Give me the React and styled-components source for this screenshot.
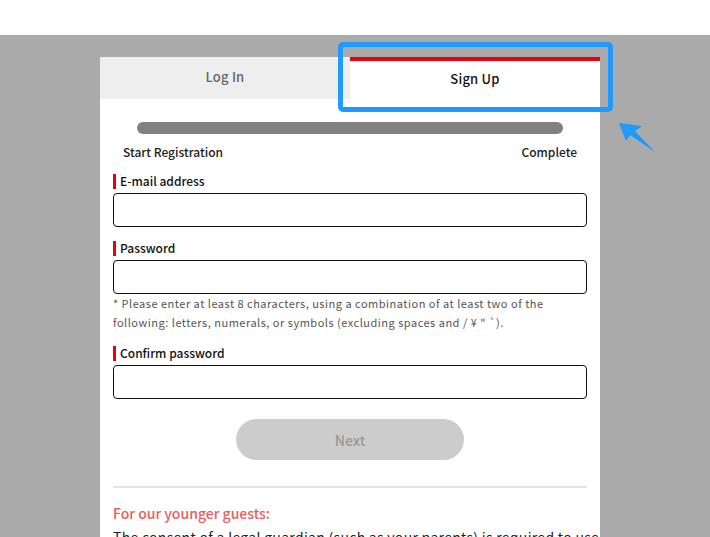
import React from 'react';
import styled, {createGlobalStyle} from 'styled-components';

const GlobalStyle = createGlobalStyle`
  html, body {
    margin: 0;
    padding: 0;
    background: #ffffff;
    font-family: "Noto Sans CJK JP", "Noto Sans", sans-serif;
    overflow: hidden;
  }
`;

const Page = styled.div`
  position: relative;
  width: 710px;
  height: 537px;
  overflow: hidden;
`;

const TopStrip = styled.div`
  height: 35px;
  background: #ffffff;
`;

const Backdrop = styled.div`
  background: #aaaaaa;
  padding: 22px 0 0 100px;
  height: 480px;
`;

const Card = styled.div`
  width: 500px;
  background: #ffffff;
`;

const Tabs = styled.div`
  display: flex;
  height: 42px;
`;

const Tab = styled.div`
  flex: 0 0 250px;
  display: flex;
  align-items: center;
  justify-content: center;
  box-sizing: border-box;
  font-size: 13px;
  font-weight: 500;
  background: ${p => (p.$active ? '#ffffff' : '#eeeeee')};
  color: ${p => (p.$active ? '#111111' : '#666666')};
  border-top: ${p => (p.$active ? '4px solid #e60012' : 'none')};
  padding-bottom: 3px;
  letter-spacing: 0.2px;
`;

const Body = styled.div`
  padding: 23px 13px 0 13px;
`;

const Progress = styled.div`
  margin: 0 24px;
  height: 12px;
  border-radius: 6px;
  background: #808080;
`;

const Steps = styled.div`
  display: flex;
  justify-content: space-between;
  padding: 0 10px;
  margin-top: 10px;
  font-size: 12px;
  font-weight: 500;
  color: #222222;
  line-height: 16px;
`;

const Field = styled.div`
  margin-top: ${p => p.$top}px;
`;

const Label = styled.div`
  display: flex;
  align-items: center;
  gap: 4px;
  font-size: 12px;
  font-weight: 500;
  color: #111111;
  line-height: 16px;

  &::before {
    content: '';
    width: 3px;
    height: 15px;
    background: #e60012;
  }
`;

const Input = styled.input`
  display: block;
  box-sizing: border-box;
  width: 474px;
  height: 34px;
  margin-top: 4px;
  border: 1px solid #111111;
  border-radius: 4px;
  background: #ffffff;
  outline: none;
`;

const Note = styled.p`
  margin: 0;
  font-size: 11px;
  line-height: 19px;
  color: #555555;
  letter-spacing: 0.5px;
  max-width: 440px;
`;

const ButtonRow = styled.div`
  display: flex;
  justify-content: center;
  margin-top: 20px;
`;

const NextButton = styled.button`
  width: 228px;
  height: 41px;
  border: none;
  border-radius: 21px;
  background: #cccccc;
  color: #999999;
  font-family: inherit;
  font-size: 14px;
  font-weight: 500;
`;

const Divider = styled.hr`
  margin: 26px 0 0;
  border: none;
  height: 2px;
  background: #e4e4e4;
`;

const NoticeTitle = styled.div`
  margin-top: 15px;
  font-size: 14px;
  font-weight: 500;
  color: #ec5c60;
  line-height: 20px;
`;

const NoticeText = styled.div`
  margin-top: 4px;
  font-size: 14px;
  color: #222222;
  line-height: 20px;
  letter-spacing: 0.3px;
  white-space: nowrap;
`;

const Highlight = styled.div`
  position: absolute;
  left: 338px;
  top: 42px;
  width: 275px;
  height: 70px;
  box-sizing: border-box;
  border: 5px solid #1f9bff;
  border-radius: 5px;
  pointer-events: none;
`;

const Arrow = styled.svg`
  position: absolute;
  left: 610px;
  top: 115px;
  width: 50px;
  height: 45px;
`;

export default function App() {
  return (
    <Page>
      <GlobalStyle />
      <TopStrip />
      <Backdrop>
        <Card>
          <Tabs>
            <Tab>Log In</Tab>
            <Tab $active>Sign Up</Tab>
          </Tabs>
          <Body>
            <Progress />
            <Steps>
              <span>Start Registration</span>
              <span>Complete</span>
            </Steps>
            <Field $top={13}>
              <Label>E-mail address</Label>
              <Input type="email" />
            </Field>
            <Field $top={13}>
              <Label>Password</Label>
              <Input type="password" />
              <Note>
                * Please enter at least 8 characters, using a combination of at least two of the
                following: letters, numerals, or symbols (excluding spaces and / ¥ " `).
              </Note>
            </Field>
            <Field $top={13}>
              <Label>Confirm password</Label>
              <Input type="password" />
            </Field>
            <ButtonRow>
              <NextButton disabled>Next</NextButton>
            </ButtonRow>
            <Divider />
            <NoticeTitle>For our younger guests:</NoticeTitle>
            <NoticeText>
              The consent of a legal guardian (such as your parents) is required to use
            </NoticeText>
          </Body>
        </Card>
      </Backdrop>
      <Highlight />
      <Arrow viewBox="610 115 50 45">
        <polygon points="619,123 642,126 635,131 655,152 630,135 626,141" fill="#1f9bff" />
      </Arrow>
    </Page>
  );
}
